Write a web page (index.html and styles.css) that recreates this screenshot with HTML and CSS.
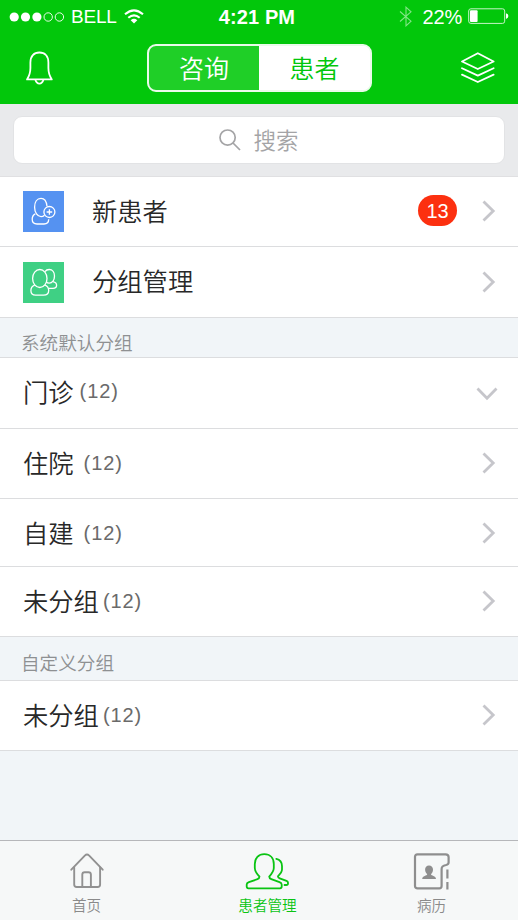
FILE: index.html
```html
<!DOCTYPE html>
<html lang="zh-CN">
<head>
<meta charset="utf-8">
<meta name="viewport" content="width=device-width">
<title>患者管理</title>
<link rel="stylesheet" href="styles.css">
</head>
<body>
<svg class="defs" width="0" height="0">
  <symbol id="chev" viewBox="0 0 14 22"><path d="M1.5 1.5 L11.2 11 L1.5 20.5" fill="none" stroke="#c6c6cb" stroke-width="2.8"/></symbol>
</svg>
<div class="app">
  <header class="header">
    <div class="status">
      <div class="status-left">
        <svg class="signal" width="56" height="12" viewBox="0 0 56 12"><g fill="#fff"><circle cx="5.2" cy="6" r="4.6"/><circle cx="16.5" cy="6" r="4.6"/><circle cx="27.9" cy="6" r="4.6"/></g><g fill="none" stroke="#fff" stroke-width=".9"><circle cx="39.2" cy="6" r="4.2"/><circle cx="50.4" cy="6" r="4.2"/></g></svg>
        <span class="carrier">BELL</span>
        <svg width="20" height="15" viewBox="0 0 20 15"><g fill="none" stroke="#fff" stroke-width="2.1"><path d="M1 5.3 Q10 -2.6 19 5.3"/><path d="M4.3 8.8 Q10 3.8 15.7 8.8"/></g><path d="M6.7 11.2 Q10 8.4 13.3 11.2 L10 14.6Z" fill="#fff"/></svg>
      </div>
      <span class="time">4:21 PM</span>
      <div class="status-right">
        <svg class="bt" width="14" height="21" viewBox="0 0 14 21"><path d="M1 5.5 L12 15.2 L7 19.8 V1.2 L12 5.8 L1 15.5" fill="none" stroke="#84e688" stroke-width="1.1"/></svg>
        <span class="percent">22%</span>
        <svg width="41" height="17" viewBox="0 0 41 17"><rect x=".7" y=".8" width="36" height="14.6" rx="2.2" fill="none" stroke="#c7f5c8" stroke-width="1"/><rect x="2" y="2.2" width="7.6" height="11.8" rx="1" fill="#fff"/><path d="M38 5.3 Q40.4 6 40.4 8 Q40.4 10.2 38 10.9Z" fill="#fff"/></svg>
      </div>
    </div>
    <nav class="nav">
      <svg class="bell" width="30" height="34" viewBox="0 0 30 34"><path d="M2 28.4 C5 24 5.4 21 5.4 17 V11.5 C5.4 5 9 1.5 14.4 1.5 C19.8 1.5 23.4 5 23.4 11.5 V17 C23.4 21 23.8 24 26.8 28.4 Z" fill="none" stroke="#fff" stroke-width="1.8" stroke-linejoin="round"/><path d="M10.4 28.8 Q11.5 32.6 14.4 32.6 Q17.3 32.6 18.4 28.8" fill="none" stroke="#fff" stroke-width="1.8"/></svg>
      <div class="segments"><span class="segment">咨询</span><span class="segment active">患者</span></div>
      <svg class="layers" width="34" height="32" viewBox="0 0 34 32"><g fill="none" stroke="#fff" stroke-width="1.8" stroke-linejoin="round" stroke-linecap="round"><path d="M16.8 1.2 L32.6 9.5 L16.8 17 L1 9.5Z"/><path d="M1 16.2 L16.8 23.6 L32.6 16.2"/><path d="M1 22.6 L16.8 30 L32.6 22.6"/></g></svg>
    </nav>
  </header>
  <div class="search">
    <div class="search-box">
      <svg width="22" height="22" viewBox="0 0 22 22"><g fill="none" stroke="#a4a4a6" stroke-width="1.7"><circle cx="8.6" cy="8.6" r="7.6"/><path d="M14 14 L21 21"/></g></svg>
      <span>搜索</span>
    </div>
  </div>
  <main class="list">
    <div class="row link">
      <svg class="tile" width="41" height="41" viewBox="0 0 41 41"><rect width="41" height="41" fill="#5592f1"/><g fill="none" stroke="#fff" stroke-width="1.3"><path d="M24 15.3 C23.5 10.5 21.3 7.4 18 7.4 C14 7.4 11.6 11.2 11.6 16.3 C11.6 21.5 14.5 25.6 18 25.6 C19.4 25.6 20.5 25.1 21.5 24.2"/><circle cx="26.4" cy="21" r="5.5"/><path d="M26.4 18.2 V23.8 M23.6 21 H29.2"/><path d="M12.3 22.8 C9.8 24 9.2 26.2 9.2 28.3 C9.2 31.4 11 33 14 33 H21 C24 33 25.7 31.2 25.7 28.3"/></g></svg>
      <span class="label">新患者</span><span class="badge">13</span>
      <svg class="chev" width="14" height="22"><use href="#chev"/></svg>
    </div>
    <div class="row link tall">
      <svg class="tile" width="41" height="41" viewBox="0 0 41 41"><rect width="41" height="41" fill="#3fd084"/><g fill="none" stroke="#fff" stroke-width="1.3"><ellipse cx="16.8" cy="16.5" rx="7.2" ry="9"/><path d="M11.7 23.1 C8.8 24.2 7.9 26.3 7.9 28.5 C7.9 31.5 9.7 33.1 12.6 33.1 H20.5 C23.5 33.1 25.7 31.6 25.7 28.5 C25.7 26 24.3 24 22 23.1"/><path d="M22 9.6 C23 8.2 24.5 7.5 26.2 7.5 C29.5 7.5 31.5 10.5 31.5 14 C31.5 18 29.3 21.2 26.2 21.2 C25 21.2 24 20.8 23.2 20"/><path d="M30 19.7 C32.5 20.3 33.6 21.7 33.6 23.3 C33.6 25.5 32 26.4 30 26.4 H26"/></g></svg>
      <span class="label">分组管理</span>
      <svg class="chev" width="14" height="22"><use href="#chev"/></svg>
    </div>
    <h2 class="section">系统默认分组</h2>
    <div class="row tall"><span class="label">门诊</span><span class="count first">(12)</span><svg class="chev open" width="14" height="22"><use href="#chev"/></svg></div>
    <div class="row"><span class="label">住院</span><span class="count wide">(12)</span><svg class="chev" width="14" height="22"><use href="#chev"/></svg></div>
    <div class="row short"><span class="label">自建</span><span class="count wide">(12)</span><svg class="chev" width="14" height="22"><use href="#chev"/></svg></div>
    <div class="row"><span class="label">未分组</span><span class="count near">(12)</span><svg class="chev" width="14" height="22"><use href="#chev"/></svg></div>
    <h2 class="section custom">自定义分组</h2>
    <div class="row"><span class="label">未分组</span><span class="count near">(12)</span><svg class="chev" width="14" height="22"><use href="#chev"/></svg></div>
  </main>
  <footer class="tabs">
    <div class="tab home">
      <svg width="36" height="38" viewBox="0 0 36 38"><g fill="none" stroke="#919191" stroke-width="1.9" stroke-linejoin="round" stroke-linecap="round"><path d="M2.3 17.7 L15.8 3.6 Q18 1.6 20.2 3.6 L33.7 17.7"/><path d="M5.2 15.5 V32.5 Q5.2 35 7.7 35 H28.6 Q31.1 35 31.1 32.5 V15.5"/><path d="M13.3 35 V22.6 Q13.3 20.2 15.7 20.2 H19.5 Q21.9 20.2 21.9 22.6 V35"/></g></svg>
      <span>首页</span>
    </div>
    <div class="tab patients">
      <svg width="44" height="38" viewBox="0 0 44 38"><g fill="none" stroke="#0ac413" stroke-width="1.8" stroke-linejoin="round" stroke-linecap="round"><path d="M14.5 24.6 C11.5 21.5 9.8 19 9.8 16 V12 C9.8 6 13.5 2.1 19.3 2.1 C25.1 2.1 28.8 6 28.8 12 V16 C28.8 19 27 21.5 24.2 24.6 C24.2 26 25 26.700 26.300 27.200 L34.500 30.200 Q36.700 31 36.700 32.600 V34.600 Q36.700 36.300 35 36.300 H3.400 Q1.700 36.300 1.700 34.600 V32.600 Q1.700 31 3.900 30.200 L12.400 27.200 C13.700 26.700 14.500 26 14.500 24.600Z"/><path d="M31.3 6.8 C34.5 7.6 37 10.2 37 14 V17.5 C37 20 35.2 22 32.9 24.300 C33 25.500 33.700 25.900 34.700 26.300 L41.500 28.900 Q43 29.500 43 30.800 V31.500 Q43 33 41.300 33 H39.5"/></g></svg>
      <span>患者管理</span>
    </div>
    <div class="tab records">
      <svg width="38" height="38" viewBox="0 0 38 38"><g fill="none" stroke="#8e8e8e" stroke-width="2.2"><path d="M4.5 2.3 H32.5 Q35.6 2.3 35.6 5 V10.5 Q35.6 12.5 33 13 Q28.6 13.7 28.6 17 V34 Q28.6 36.3 26.3 36.3 H4.5 Q2 36.3 2 34 V4.8 Q2 2.3 4.5 2.3Z"/><path d="M34.4 17.5 V26.5 M34.4 30 V37.5"/></g><path d="M16 13.4 C13.5 13.4 12.1 15.2 12.1 17.6 C12.1 19.5 13 21.2 14.2 22.2 C14.2 23.8 9.2 23.5 9.2 27 H23 C23 23.5 18 23.8 18 22.2 C19.2 21.2 20 19.5 20 17.6 C20 15.2 18.5 13.4 16 13.4Z" fill="#8e8e8e"/></svg>
      <span>病历</span>
    </div>
  </footer>
</div>
</body>
</html>
```
FILE: styles.css
```css
* { box-sizing: border-box; }
body {
  margin: 0;
  font-family: "Liberation Sans", "Noto Sans CJK SC", sans-serif;
  font-weight: 350;
  background: #f1f5f8;
}
svg { display: block; flex: none; }
.defs { position: absolute; }
.app { display: flex; flex-direction: column; width: 518px; height: 920px; overflow: hidden; }

.header { height: 104px; background: #02c70b; color: #fff; }
.status {
  display: grid;
  grid-template-columns: 1fr auto 1fr;
  align-items: center;
  height: 33px;
  padding: 0 9px;
}
.status-left, .status-right { display: flex; align-items: center; }
.status-right { justify-content: flex-end; }
.carrier { margin: 1px 7px 0 6px; font-size: 19px; letter-spacing: -.2px; }
.time { font-size: 20px; font-weight: 700; padding: 1px 4px 0 0; letter-spacing: .1px; }
.percent { margin: 1px 6px 0 10px; font-size: 20px; letter-spacing: -.2px; }

.nav { display: flex; align-items: flex-start; padding: 11px 23px 0 25px; }
.bell { margin-top: 7px; }
.segments {
  display: flex;
  width: 225px;
  height: 48px;
  margin-left: 92px;
  border: 2px solid #eafbea;
  border-radius: 9px;
  background: #fff;
  overflow: hidden;
}
.segment {
  width: 110px;
  font-size: 25px;
  line-height: 46px;
  text-align: center;
  background: #1fcf27;
}
.segment.active { width: 111px; background: #fff; color: #02c70b; }
.layers { margin: 8px 0 0 auto; }

.search { height: 73px; padding: 12px 13px; background: #e9eaec; border-bottom: 1px solid #e0e0e2; }
.search-box {
  display: flex;
  align-items: center;
  justify-content: center;
  gap: 12px;
  height: 48px;
  border-radius: 9px;
  border: 1px solid #e2e3e5;
  background: #fff;
  color: #a4a4a6;
  font-size: 22.5px;
}
.search-box span { margin-top: -3px; }

.row {
  display: flex;
  align-items: center;
  height: 70px;
  padding: 0 22px 0 23px;
  border-bottom: 1px solid #dcdddf;
  background: #fff;
}
.row.tall { height: 71px; }
.row.short { height: 68px; padding-top: 2px; }
.label { font-size: 25.3px; line-height: 36px; color: #282828; }
.tile { margin-right: 28px; }
.count { margin: -1px 0 0 10px; font-size: 20px; letter-spacing: .9px; color: #6a6a6a; }
.count.first { margin: -4px 0 0 6px; }
.count.near { margin-left: 4px; }
.chev { margin: -1px 0 0 auto; }
.chev.open { transform: rotate(90deg); margin: 1px 2px 0 auto; }
.badge {
  width: 39px;
  height: 31px;
  margin: -2px 0 0 auto;
  border-radius: 16px;
  background: #fc3010;
  color: #fff;
  font-size: 20px;
  line-height: 32px;
  text-align: center;
}
.badge + .chev { margin-left: 25px; }
.section {
  height: 40px;
  margin: 0;
  padding: 12px 21px 0;
  border-bottom: 1px solid #dcdddf;
  font-size: 18.6px;
  font-weight: inherit;
  line-height: 27px;
  color: #8e9092;
}
.section.custom { height: 44px; padding-top: 13px; }

.tabs {
  display: flex;
  height: 80px;
  margin-top: auto;
  border-top: 1px solid #b6b7ba;
  background: #f6f8f8;
  color: #8a8a8a;
  font-size: 14.6px;
}
.tab { display: flex; flex-direction: column; align-items: center; padding-top: 11px; line-height: 22px; }
.tab span { margin-top: 5px; }
.home { width: 173px; }
.patients { width: 189px; color: #0ac413; }
.patients svg { margin-right: 2px; }
.records { width: 139px; }
```
